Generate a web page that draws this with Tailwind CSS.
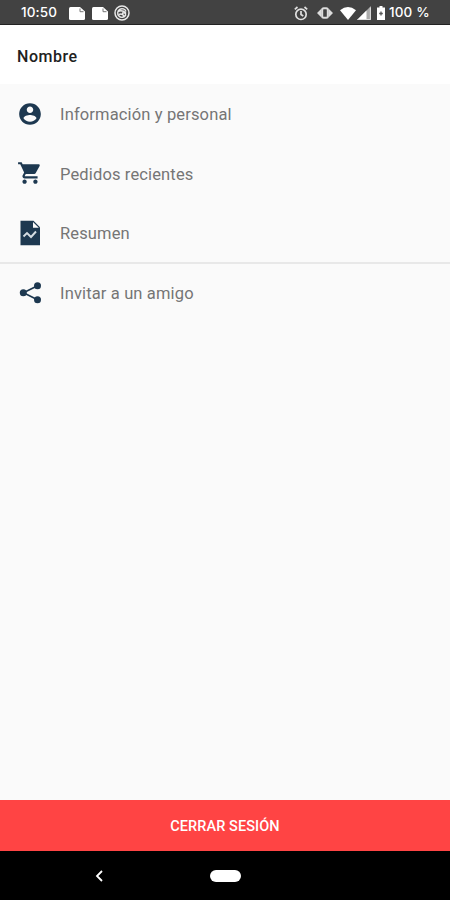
<!DOCTYPE html>
<html lang="es">
<head>
<meta charset="utf-8">
<title>Nombre</title>
<script src="https://cdn.jsdelivr.net/npm/@tailwindcss/browser@4"></script>
</head>
<body class="w-[450px] h-[900px] overflow-hidden flex flex-col bg-[#fafafa] font-[Roboto,sans-serif]">
  <header class="h-[25px] shrink-0 bg-[#424242] border-b border-[#222] flex items-center justify-between pl-[21px] pr-[20px] pt-[2px] text-white">
    <div class="flex items-center">
      <span class="w-[48px] whitespace-nowrap text-[13.5px] font-medium leading-none font-[Inter,sans-serif] tracking-[0.1px]">10:50</span>
      <svg class="w-[16px] h-[13px]" viewBox="0 0 16 13" fill="#fff"><path d="M1.500 0H11l5 4.500v7Q16 13 14.500 13h-13Q0 13 0 11.500v-10Q0 0 1.500 0z"/><path d="M11 1.500v3.200h3.500" fill="none" stroke="#777" stroke-width="1"/></svg>
      <svg class="w-[16px] h-[13px] ml-[7px]" viewBox="0 0 16 13" fill="#fff"><path d="M1.500 0H11l5 4.500v7Q16 13 14.500 13h-13Q0 13 0 11.500v-10Q0 0 1.500 0z"/><path d="M11 1.500v3.200h3.500" fill="none" stroke="#777" stroke-width="1"/></svg>
      <svg class="w-[16px] h-[16px] ml-[6px]" viewBox="0 0 16 16" fill="none" stroke="#e8e8e8"><circle cx="8" cy="8" r="7" stroke-width="1.500"/><path d="M11.500 10.500A4.300 4.300 0 1 1 12 6.500M4 6.500q4-2 8 1.500M5 9.500q3-1.500 5 1.500M8 8h3.500v3" stroke-width="1.400"/></svg>
    </div>
    <div class="flex items-center">
      <svg class="w-[14px] h-[15px]" viewBox="0 0 14 15" fill="none" stroke="#e0e0e0" stroke-width="1.700"><circle cx="7" cy="8.300" r="5.200"/><path d="M7 5v3.500l2.300 1.500M.8 3.300l2.700-2.300M13.200 3.300L10.500 1"/></svg>
      <svg class="w-[16px] h-[12px] ml-[9px]" viewBox="0 0 16 12" fill="#dcdcdc"><path d="M4.500 1.500v9L0 6zM11.500 1.500v9L16 6z"/><rect x="5.200" y="1.200" width="5.600" height="9.600" rx="1.500" fill="#424242" stroke="#dcdcdc" stroke-width="2"/></svg>
      <svg class="w-[16px] h-[13px] ml-[7px]" viewBox="0 0 16 13" fill="#fff"><path d="M0 3.200Q8-3 16 3.200L8 13z"/></svg>
      <svg class="w-[14px] h-[14px] ml-[1px]" viewBox="0 0 14 14"><path d="M14 0v14H0z" fill="#aaa"/><path d="M9.500 4.500V14H0z" fill="#fff"/><path d="M13.400 1.500v12H1" fill="none" stroke="#ddd"/></svg>
      <svg class="w-[8px] h-[14px] ml-[6px]" viewBox="0 0 8 14" fill="#fff"><path d="M2.500 0h3v1.500H8V14H0V1.500h2.500z"/><path d="M4 5.500v4M2.200 7.500h3.600" stroke="#555" stroke-width="1.300"/></svg>
      <span class="ml-[4px] w-[41px] whitespace-nowrap text-[13.500px] font-medium leading-none font-[Inter,sans-serif] tracking-[0.150px]">100 %</span>
    </div>
  </header>
  <h1 class="h-[59px] shrink-0 bg-white flex items-center pl-[17px] pt-[4px] text-[16px] font-medium text-[#212121] tracking-[0.550px]">Nombre</h1>
  <nav class="flex-1 text-[16.500px] text-[#757575] tracking-[0.140px]">
    <a class="h-[60px] flex items-center pl-[17px] gap-[17px]">
      <svg class="w-[26px] h-[26px]" viewBox="0 0 24 24" fill="#1d3850"><path d="M12 2C6.480 2 2 6.480 2 12s4.480 10 10 10 10-4.480 10-10S17.520 2 12 2zm0 3c1.660 0 3 1.340 3 3s-1.340 3-3 3-3-1.340-3-3 1.340-3 3-3zm0 14.200c-2.500 0-4.710-1.280-6-3.220.030-1.990 4-3.080 6-3.080 1.990 0 5.970 1.090 6 3.080-1.290 1.940-3.500 3.220-6 3.220z"/></svg>
      <span class="pt-[2px]">Información y personal</span>
    </a>
    <a class="h-[60px] flex items-center pl-[17px] gap-[17px]">
      <svg class="w-[26px] h-[26px] -mt-[2px]" viewBox="0 0 24 24" fill="#1d3850"><path d="M7 18c-1.100 0-1.990.9-1.990 2S5.900 22 7 22s2-.9 2-2-.9-2-2-2zM1 2v2h2l3.600 7.590-1.350 2.450c-.16.280-.25.610-.25.960 0 1.100.9 2 2 2h12v-2H7.420c-.14 0-.25-.11-.25-.25l.03-.12.900-1.630h7.450c.75 0 1.410-.41 1.750-1.030l3.580-6.490c.08-.14.120-.31.120-.48 0-.55-.45-1-1-1H5.210l-.94-2H1zm16 16c-1.100 0-1.990.9-1.990 2s.89 2 1.990 2 2-.9 2-2-.9-2-2-2z"/></svg>
      <span class="pt-[2px]">Pedidos recientes</span>
    </a>
    <a class="h-[60px] flex items-center pl-[17px] gap-[17px] border-b-2 border-[#e8e8e8]">
      <svg class="w-[26px] h-[26px]" viewBox="0 0 26 26"><path d="M3.500.8h13L23 7.300v17.900H3.500z" fill="#1d3850"/><path d="M16 2v5.800h5.800z" fill="#fafafa"/><path d="M6.500 16.500l3.500-3.500 4 4 5-5.500" fill="none" stroke="#d5dde3" stroke-width="1.900"/></svg>
      <span class="pt-[2px]">Resumen</span>
    </a>
    <a class="h-[59px] flex items-center pl-[17px] gap-[17px]">
      <svg class="w-[26px] h-[26px] -mt-[1px]" viewBox="0 0 26 26" fill="#1d3850"><path d="M20.500 5.800L6.500 12.800l14 7" fill="none" stroke="#1d3850" stroke-width="1.700"/><circle cx="20.500" cy="5.800" r="3.500"/><circle cx="6.300" cy="12.800" r="3.500"/><circle cx="20.500" cy="19.800" r="3.500"/></svg>
      <span class="pt-[1px]">Invitar a un amigo</span>
    </a>
  </nav>
  <button class="h-[51px] shrink-0 bg-[#ff4444] pt-[2px] text-white text-[14.500px] font-medium tracking-[0.080px]">CERRAR SESIÓN</button>
  <footer class="h-[49px] shrink-0 bg-black flex items-center pl-[95px]">
    <svg class="w-[8px] h-[12px]" viewBox="0 0 8 12" fill="none" stroke="#fff" stroke-width="1.800"><path d="M7 1L2 6l5 5"/></svg>
    <div class="ml-[107px] w-[31px] h-[12px] rounded-full bg-white"></div>
  </footer>
</body>
</html>
